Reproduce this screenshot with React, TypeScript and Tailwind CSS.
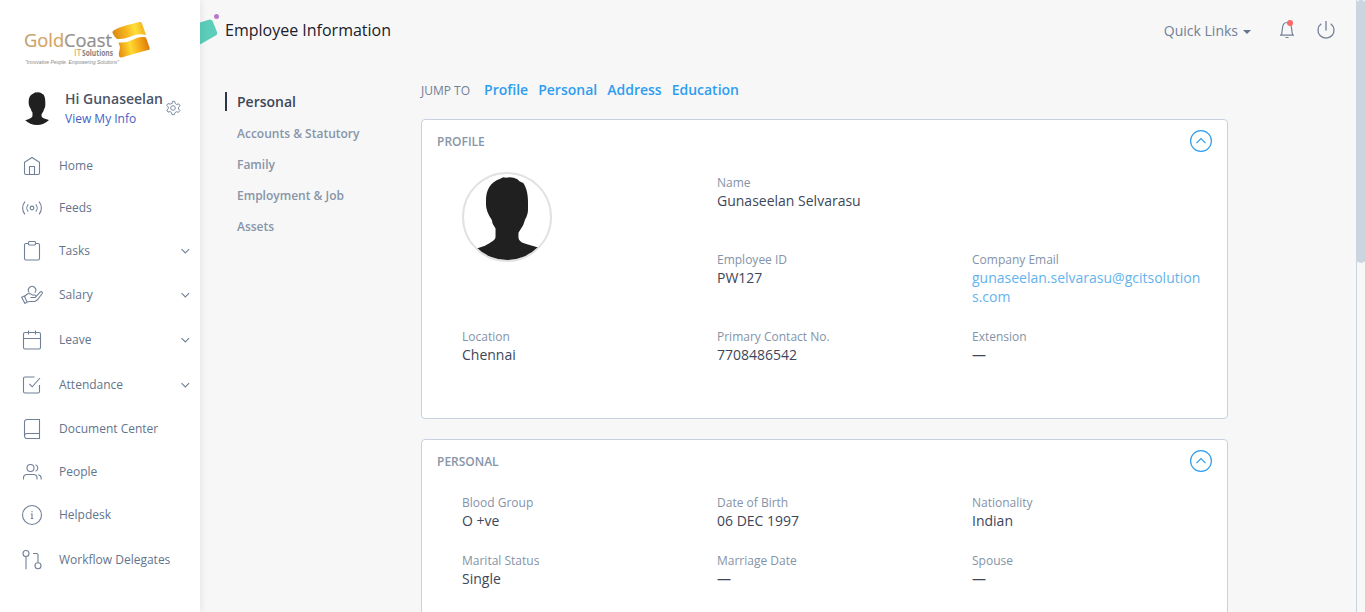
import React from "react";

type NavItem = { label: string; h: string; expandable?: boolean; icon: React.ReactNode };

const nav: NavItem[] = [
  { label: "Home", h: "h-[42px]", icon: <><path d="M4.500 8.200v10.800a1.500 1.500 0 0 0 1.500 1.500h12a1.500 1.500 0 0 0 1.500-1.500V8.200L12 3.500z" /><path d="M9.500 20.500v-8h5v8" /></> },
  { label: "Feeds", h: "h-[42px]", icon: <><circle cx="12" cy="12" r="1.900" /><path d="M8.300 8.300a5.500 5.500 0 0 0 0 7.400M15.700 8.300a5.500 5.500 0 0 1 0 7.400M5 5.700a9.500 9.500 0 0 0 0 12.600M19 5.700a9.500 9.500 0 0 1 0 12.600" /></> },
  { label: "Tasks", h: "h-[44px]", expandable: true, icon: <><path d="M8.500 4.500H6A1.500 1.500 0 0 0 4.500 6v13.500A1.500 1.500 0 0 0 6 21h12a1.500 1.500 0 0 0 1.500-1.500V6A1.500 1.500 0 0 0 18 4.500h-2.500" /><rect x="8.500" y="2.500" width="7" height="3.500" rx="1" /></> },
  { label: "Salary", h: "h-[44px]", expandable: true, icon: <><path d="M9.300 9.600a3.700 3.700 0 1 1 5.600 0" /><path d="M1.700 14.200l2.600-1.200 2.800 6-2.200 1.400zM4.500 13.500l3-2.700h3l2 1.200h2.200c1.500 0 1.700 2.500 0 2.500H10.500M16.200 13.300l4-4.300c1.300-1 2.800.2 2 1.500l-5 6.500-2.300 1.500H9.500l-2.400.500" /></> },
  { label: "Leave", h: "h-[46px]", expandable: true, icon: <><rect x="3.500" y="4.500" width="17" height="16.500" rx="1.500" /><path d="M3.500 10.500h17M8.500 2.500v4M15.500 2.500v4" /></> },
  { label: "Attendance", h: "h-[44px]", expandable: true, icon: <><path d="M14.500 4H5A1.500 1.500 0 0 0 3.500 5.500v13A1.500 1.500 0 0 0 5 20h13a1.500 1.500 0 0 0 1.500-1.500V12M9.500 11l2.700 2.800L20 5" /></> },
  { label: "Document Center", h: "h-[44px]", icon: <><path d="M19.500 16.500v-14H7A2.500 2.500 0 0 0 4.500 5v14M19.500 16.500v5H7a2.500 2.500 0 0 1-2.500-2.500A2.500 2.500 0 0 1 7 16.500z" /></> },
  { label: "People", h: "h-[42px]", icon: <><circle cx="10.500" cy="8" r="3.500" /><path d="M3.500 19.500V18a3.500 3.500 0 0 1 3.500-3.500h6.500A3.500 3.500 0 0 1 17 18v1.500M15.500 4.700a3.500 3.500 0 0 1 0 6.600M18.300 14.800a3.600 3.600 0 0 1 2.900 3.400v1.300" /></> },
  { label: "Helpdesk", h: "h-[44px]", icon: <><circle cx="12" cy="12" r="9.500" /><path d="M10.800 11h1.200v4.500M10.800 15.500h2.400M12 8v1.300" /></> },
  { label: "Workflow Delegates", h: "h-[46px]", icon: <><circle cx="6" cy="5.500" r="3" /><path d="M6 8.500v12.800M13 5.500h3.500A1.500 1.500 0 0 1 18 7v7.500" /><circle cx="18" cy="17.800" r="3" /></> },
];

function Person({ className }: { className: string }) {
  return (
    <svg className={className} viewBox="0 0 90 90">
      <path fill="#202020" d="M23 28C23 17 27 9 38 5l3-1.500 3 .5 4-.5 4 .5 4 1.500 2 2 4 2c3 4 5 11 5 20v8c0 3-1 7-3 10l-2 6-5 8v5c0 4 5 6 9 7l17 5v20H4V81l18-6c6-3 11-6 11-9v-9l-3-5-1-4c-4-6-6-11-6-16z" />
    </svg>
  );
}

function Logo() {
  return (
    <svg className="block h-[50px] w-[132px]" viewBox="20 18 132 50">
      <defs>
        <linearGradient id="word" gradientUnits="userSpaceOnUse" x1="25" x2="113" y1="0" y2="0">
          <stop offset="0" stopColor="#b9a079" /><stop offset=".2" stopColor="#d6a35f" /><stop offset=".42" stopColor="#d6a35f" /><stop offset=".48" stopColor="#929090" /><stop offset="1" stopColor="#8e8c8d" />
        </linearGradient>
        <linearGradient id="goldTop" gradientUnits="userSpaceOnUse" x1="114" x2="147" y1="36" y2="28">
          <stop offset="0" stopColor="#d98a17" /><stop offset=".35" stopColor="#f6b31c" /><stop offset=".65" stopColor="#ffdf3c" /><stop offset="1" stopColor="#efa616" />
        </linearGradient>
        <linearGradient id="goldBottom" gradientUnits="userSpaceOnUse" x1="118" x2="149" y1="50" y2="43">
          <stop offset="0" stopColor="#e58a0c" /><stop offset=".4" stopColor="#ffd932" /><stop offset=".7" stopColor="#f5aa18" /><stop offset="1" stopColor="#dc780a" />
        </linearGradient>
      </defs>
      <text x="24" y="46.500" fontSize="18.500" fill="url(#word)" stroke="url(#word)" strokeWidth=".2" textLength="88" lengthAdjust="spacingAndGlyphs" fontFamily="Open Sans, sans-serif">GoldCoast</text>
      <text x="74" y="56" fontSize="8.500" fill="#c69b62" textLength="7.500" lengthAdjust="spacingAndGlyphs" fontFamily="Open Sans, sans-serif">IT</text>
      <text x="82" y="56" fontSize="8.500" fontWeight="700" fill="#858383" textLength="31" lengthAdjust="spacingAndGlyphs" fontFamily="Open Sans, sans-serif">Solutions</text>
      <text x="25" y="64" fontSize="6.200" fontStyle="italic" fill="#888" textLength="94" lengthAdjust="spacingAndGlyphs" fontFamily="Liberation Sans, sans-serif">"Innovative People. Empowering Solutions"</text>
      <path fill="url(#goldTop)" d="M112.500 33q-.5-1.500 1-2.500 5-3 12-5l14-3.500q2-.4 2.500 1.500l4 11.500c-13-3-16 5-29 4q-2.500-2-4.500-6z" />
      <path fill="url(#goldBottom)" d="M119.500 42.500c13 1 16-7.500 26.500-5l3.500 10q.8 2-1.500 2.500l-11 3-15.500 4.500q-1.800.3-2.500-1.500-.8-3 .5-5.500 1-4-1-8z" />
    </svg>
  );
}

function Field({ label, value, link }: { label: string; value: string; link?: boolean }) {
  return (
    <div className="min-w-0 pr-[25px]">
      <div className="h-[18px] text-[12px] leading-[20px] text-[#8493a8]">{label}</div>
      <div className={link ? "text-[14px] leading-[19px] break-all text-[#63b3ed]" : "text-[14px] leading-[19px] text-[#3d4658]"}>{value}</div>
    </div>
  );
}

function CardHead({ title }: { title: string }) {
  return (
    <div className="flex h-[42px] items-center justify-between px-[15px]">
      <h2 className="pt-[2px] text-[12px] leading-[18px] font-semibold text-[#8795a8]">{title}</h2>
      <svg className="size-[22px]" viewBox="0 0 22 22" fill="none" stroke="#2f9df0" strokeWidth="1.200">
        <circle cx="11" cy="11" r="10.400" /><path d="M6.500 13.200L11 8.700l4.500 4.500" />
      </svg>
    </div>
  );
}

export default function App() {
  return (
    <div className="flex h-[612px] w-full overflow-hidden bg-[#f7f7f7] font-['Open_Sans',sans-serif]">
      <aside className="z-10 w-[200px] shrink-0 bg-white shadow-[0_0_8px_rgba(0,0,0,0.1)]">
        <div className="pt-[18px] pl-[20px]"><Logo /></div>
        <div className="flex h-[77px] pt-[21px] pl-[20px]">
          <Person className="mt-[2px] size-[34px] rounded-full" />
          <div className="ml-[11px] w-[100px] whitespace-nowrap">
            <div className="text-[14px] leading-[20px] font-semibold text-[#4a5568]">Hi Gunaseelan</div>
            <div className="text-[12px] leading-[20px] text-[#4361c9]">View My Info</div>
          </div>
          <svg className="mt-[11px] size-[16px]" viewBox="0 0 16 16" fill="none" stroke="#7d8aa5" strokeWidth="1" strokeLinejoin="round">
            <circle cx="8" cy="8" r="2.300" />
            <path d="M7.200 3.300l.3-2h2.300l.4 2.200 1.500 1 2-.7 1.300 2-1.500 1.500v1.700l1.300 1.500-1.400 1.900-2-.7-1.500 1-.6 2H7l-.5-2.100-1.400-1-2.100.5L1.800 10l1.500-1.400V7L1.700 5.400l1.300-1.900 2 .700z" />
          </svg>
        </div>
        <nav>
          {nav.map((n) => (
            <div key={n.label} className={`flex items-center pr-[10px] pl-[20px] ${n.h}`}>
              <svg className="size-6 shrink-0" viewBox="0 0 24 24" fill="none" stroke="#718096" strokeWidth="1.100">{n.icon}</svg>
              <span className="ml-[15px] flex-1 text-[12px] leading-[18px] text-[#64748b]">{n.label}</span>
              {n.expandable && <svg className="size-[10px]" viewBox="0 0 10 10" fill="none" stroke="#718096" strokeWidth="1.100"><path d="M1.500 3.200L5.300 7l3.800-3.800" /></svg>}
            </div>
          ))}
        </nav>
      </aside>
      <div className="flex min-w-0 flex-1 flex-col">
        <header className="flex h-[60px] items-center">
          <svg className="h-[60px] w-[25px]" viewBox="0 0 25 60"><path fill="#5bcdb9" d="M0 22.500l8-2.600q3.500-1 4.800 1.500l4.200 10.500q.8 2.500-1.800 3.900L0 44.500z" /><circle cx="16.500" cy="16.500" r="2.500" fill="#b77ac8" /></svg>
          <h1 className="flex-1 text-[16px] text-[#1a202c]">Employee Information</h1>
          <div className="flex items-center pr-[20px]">
            <span className="text-[14px] text-[#718096]">Quick Links</span>
            <span className="mt-[3px] ml-[5px] border-x-4 border-t-4 border-x-transparent border-t-[#64748b]" />
            <svg className="ml-[25px] size-[22px]" viewBox="0 0 22 22" fill="none" stroke="#718096" strokeWidth="1.200"><path d="M4 16.200h14M5.500 16l1-7C6.700 5.500 8.300 3.500 11 3.500s4.300 2 4.500 5.500l1 7M9.500 18.500h3" /><circle cx="14" cy="4" r="3" fill="#ff6868" stroke="none" /></svg>
            <svg className="ml-[18px] size-[20px]" viewBox="0 0 20 20" fill="none" stroke="#718096" strokeWidth="1.300"><path d="M10 1v9.500M5.300 3.700a8 8 0 1 0 9.400 0" /></svg>
          </div>
        </header>
        <main className="flex">
          <nav className="w-[196px] pt-[32px] pl-[25px] text-[12px] leading-[31px] font-semibold text-[#8795a8]">
            <div className="mb-[7px] flex h-[19px] items-center border-l-2 border-[#2d3748] pl-[10px] text-[14px] text-[#3d4658]">Personal</div>
            <div className="pl-[12px]">Accounts &amp; Statutory</div>
            <div className="pl-[12px]">Family</div>
            <div className="pl-[12px]">Employment &amp; Job</div>
            <div className="pl-[12px]">Assets</div>
          </nav>
          <div className="mt-[20px] ml-[25px] w-[807px]">
            <div className="flex h-[39px] gap-[10px] text-[14px] leading-[20px] font-semibold text-[#2f9df0]">
              <span className="mr-[4px] text-[12px] leading-[22px] font-normal text-[#718096]">JUMP TO</span>
              <a>Profile</a><a>Personal</a><a>Address</a><a>Education</a>
            </div>
            <section className="h-[300px] rounded-[4px] border border-[#c8d2df] bg-white">
              <CardHead title="PROFILE" />
              <div className="grid grid-cols-[255px_255px_255px] grid-rows-[77px_77px_77px] pt-[11px] pl-[40px]">
                <div className="-mt-px size-[90px] overflow-hidden rounded-full border-2 border-[#e2e2e2]"><Person className="size-[86px]" /></div>
                <Field label="Name" value="Gunaseelan Selvarasu" />
                <div /><div />
                <Field label="Employee ID" value="PW127" />
                <Field label="Company Email" value="gunaseelan.selvarasu@gcitsolutions.com" link />
                <Field label="Location" value="Chennai" />
                <Field label="Primary Contact No." value="7708486542" />
                <Field label="Extension" value="—" />
              </div>
            </section>
            <section className="mt-[20px] h-[300px] rounded-[4px] border border-[#c8d2df] bg-white">
              <CardHead title="PERSONAL" />
              <div className="grid grid-cols-[255px_255px_255px] grid-rows-[58px_58px] pt-[11px] pl-[40px]">
                <Field label="Blood Group" value="O +ve" />
                <Field label="Date of Birth" value="06 DEC 1997" />
                <Field label="Nationality" value="Indian" />
                <Field label="Marital Status" value="Single" />
                <Field label="Marriage Date" value="—" />
                <Field label="Spouse" value="—" />
              </div>
            </section>
          </div>
        </main>
      </div>
      <div className="w-[10px] shrink-0 border-x border-[#cbd5e0]"><div className="-mx-px h-[263px] rounded-[5px] bg-[#cbd5e0]" /></div>
    </div>
  );
}
